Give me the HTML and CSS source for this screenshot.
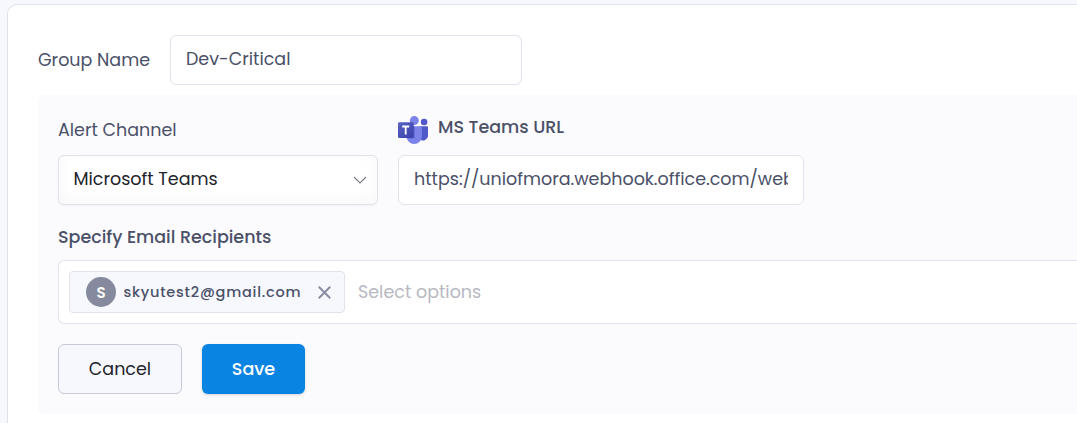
FILE: index.html
```html
<!DOCTYPE html>
<html lang="en">
<head>
<meta charset="utf-8">
<title>Alert group</title>
<link rel="stylesheet" href="styles.css">
</head>
<body>
<main class="card">
  <div class="group-row">
    <label class="label label-group">Group Name</label>
    <div class="input input-group">Dev-Critical</div>
  </div>
  <section class="panel">
    <div class="fields">
      <div class="field field-channel">
        <div class="field-head"><span class="label">Alert Channel</span></div>
        <div class="input select">
          <span>Microsoft Teams</span>
          <svg class="chevron" width="14" height="8" viewBox="0 0 14 8"><path d="M1 1l6 6 6-6" fill="none" stroke="#7c7e88" stroke-width="1.2"/></svg>
        </div>
      </div>
      <div class="field field-url">
        <div class="field-head url-head">
          <svg class="logo" width="30" height="28" viewBox="0 0 30 28">
            <defs><linearGradient id="tile" x1="0" y1="0" x2="1" y2="1"><stop offset="0" stop-color="#5a62c3"/><stop offset="1" stop-color="#3940ab"/></linearGradient></defs>
            <circle cx="26.1" cy="6" r="3.3" fill="#5059c9"/>
            <path d="M21.500 10.300H29a1 1 0 0 1 1 1v7.700a5 5 0 0 1-8.500 4z" fill="#5059c9"/>
            <circle cx="16.300" cy="4.600" r="4.500" fill="#7b83eb"/>
            <path d="M8.500 10.300h14.200a1.200 1.200 0 0 1 1.200 1.200v8.800a7.700 7.700 0 0 1-15.400 0z" fill="#7b83eb"/>
            <path d="M12 10.300h4.800v12.200H9z" fill="#4c54ba" opacity=".5"/>
            <rect x="0" y="6.200" width="15.700" height="15.700" rx="1.300" fill="url(#tile)"/>
            <path d="M4.200 10.500h7M7.700 10.500v8" fill="none" stroke="#fff" stroke-width="1.800"/>
          </svg>
          <span class="label strong">MS Teams URL</span>
        </div>
        <div class="input input-url"><span class="clip">https://uniofmora.webhook.office.com/webhookb2</span></div>
      </div>
    </div>
    <div class="label strong recipients-label">Specify Email Recipients</div>
    <div class="recipients">
      <div class="chip">
        <span class="avatar">S</span>
        <span class="email">skyutest2@gmail.com</span>
        <svg class="close" width="13" height="13" viewBox="0 0 12 12"><path d="M.7.700l10.600 10.600M11.300.700L.700 11.300" fill="none" stroke="#858a9e" stroke-width="1.700"/></svg>
      </div>
      <span class="placeholder">Select options</span>
    </div>
    <div class="actions">
      <button class="btn btn-cancel">Cancel</button>
      <button class="btn btn-save">Save</button>
    </div>
  </section>
</main>
</body>
</html>
```
FILE: styles.css
```css
* { box-sizing: border-box; }
body {
  margin: 0;
  padding: 4px 0 0 7px;
  height: 423px;
  overflow: hidden;
  background: #f7f8fe;
  color: #4a5068;
  font: 400 17.5px/24px Poppins, Inter, "Noto Sans", sans-serif;
  white-space: nowrap;
}
.card {
  height: 419px;
  padding: 30px 0 0 30px;
  background: #fff;
  border: 1px solid #e2e2ec;
  border-width: 1px 0 0 1px;
  border-radius: 10px 0 0 0;
}
.group-row { display: flex; align-items: center; height: 50px; }
.label-group { width: 132px; }
.input {
  display: flex;
  align-items: center;
  height: 50px;
  padding: 0 15px 2px;
  background: #fff;
  border: 1px solid #e2e2ec;
  border-radius: 6px;
}
.input-group { width: 352px; }
.panel {
  margin-top: 10px;
  height: 319px;
  padding: 20px 0 20px 20px;
  background: #fbfbfe;
  border-radius: 6px 0 0 6px;
}
.fields { display: flex; gap: 20px; }
.field-channel { width: 320px; }
.field-url { width: 406px; }
.field-head { display: flex; height: 40px; padding-top: 3px; }
.url-head { padding-top: 0; }
.logo { margin: 1px 10px 0 0; }
.strong { font-weight: 500; }
.select {
  justify-content: space-between;
  padding-left: 14.5px;
  padding-right: 10px;
  color: #22232b;
  box-shadow: inset 0 -4px 16px rgba(0, 0, 0, .035), 0 1px 2px rgba(0, 0, 0, .04);
}
.chevron { margin-top: 2px; }
.clip { width: 374px; overflow: hidden; }
.recipients-label { height: 55px; padding-top: 20px; }
.recipients {
  display: flex;
  align-items: center;
  height: 64px;
  padding-left: 10px;
  background: #fff;
  border: 1px solid #e2e2ec;
  border-right: 0;
  border-radius: 6px 0 0 6px;
}
.chip {
  display: flex;
  align-items: center;
  width: 276px;
  height: 42px;
  padding: 0 13px 0 16px;
  background: #f7f8fe;
  border: 1px solid #e2e2ec;
  border-radius: 4px;
  font-size: 14.5px;
  font-weight: 500;
}
.email { letter-spacing: .77px; }
.avatar {
  width: 30px;
  height: 30px;
  margin-right: 7.5px;
  border-radius: 50%;
  background: #858a9e;
  color: #fff;
  font-size: 15px;
  font-weight: 600;
  line-height: 31px;
  text-align: center;
}
.close { margin-left: auto; }
.placeholder { margin-left: 13px; color: #b7b8c2; }
.actions { display: flex; gap: 20px; margin-top: 20px; }
.btn {
  height: 50px;
  padding: 0;
  border: 0;
  border-radius: 6px;
  font: inherit;
}
.btn-cancel {
  width: 124px;
  color: #22232b;
  background: #f7f8fe;
  border: 1px solid #c8cad9;
}
.btn-save {
  width: 103px;
  color: #fff;
  background: #0984e3;
  font-weight: 500;
  box-shadow: 0 1px 3px rgba(0, 0, 0, .16);
}
```
